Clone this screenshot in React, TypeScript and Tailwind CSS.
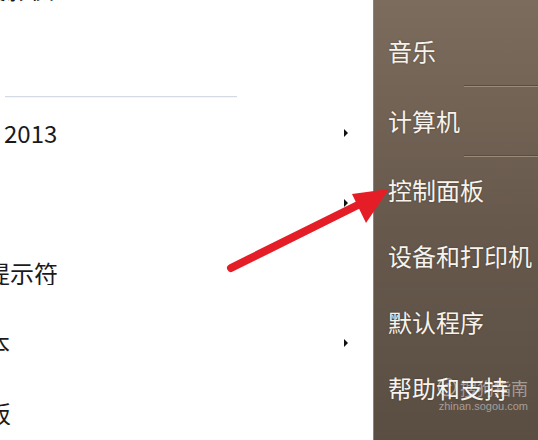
const Caret = () => (
  <svg width="6" height="10" viewBox="0 0 6 10" className="shrink-0">
    <path d="M1 1 L5 5 L1 9 Z" fill="#111" />
  </svg>
);

const leftRows: { text: string; offset: string; arrow: boolean }[] = [
  { text: "2013", offset: "ml-[4px]", arrow: true },
  { text: "", offset: "", arrow: true },
  { text: "命令提示符", offset: "-ml-[62px]", arrow: false },
  { text: "记事本", offset: "-ml-[62px]", arrow: true },
  { text: "写字板", offset: "-ml-[61px]", arrow: false },
];

const rightItems = ["音乐", "计算机", "控制面板", "设备和打印机", "默认程序", "帮助和支持"];

const App = () => {
  return (
    <div
      className="relative w-[538px] h-[440px] flex overflow-hidden bg-white"
      style={{ fontFamily: '"Noto Sans CJK SC", "Noto Sans", sans-serif' }}>
      {/* left column of the start menu */}
      <div className="w-[373px] shrink-0 flex flex-col overflow-hidden">
        <div className="h-[70px] shrink-0 -mt-[46px] flex items-center text-[24px] text-[#1a1a1a] whitespace-nowrap">
          <span className="-ml-[90px]">连接到投影仪</span>
        </div>
        <div className="shrink-0 mt-[72px] ml-[5px] w-[232px] h-px bg-[#d5dbe4]" />
        <div className="shrink-0 ml-[5px] w-[232px] h-px bg-[#f3f6fa]" />
        {leftRows.map((row, i) => (
          <div key={i} className="h-[70px] shrink-0 flex items-center whitespace-nowrap">
            <div className="w-[343px] overflow-hidden flex">
              <span className={`text-[24px] leading-none text-[#1a1a1a] ${row.offset}`}>
                {row.text}
              </span>
            </div>
            {row.arrow && <Caret />}
          </div>
        ))}
      </div>

      {/* right column */}
      <div className="flex-1 flex flex-col border-l border-[#8d8378] bg-gradient-to-b from-[#7c6c5d] via-[#67594c] to-[#5a4e43] pt-[17px]">
        {rightItems.map((item, i) => (
          <div key={item} className="flex flex-col">
            <div
              className={`${i < 2 ? "h-[68px]" : "h-[66px]"} flex items-center pl-[14px] text-[24px] leading-none text-[#f7f3ec] whitespace-nowrap [text-shadow:0_0_2px_rgba(0,0,0,0.35)]`}>
              {item}
            </div>
            {i < 2 && (
              <div className="ml-[90px] h-[2px] flex flex-col">
                <div className="h-px bg-[#5a4e43]" />
                <div className="h-px bg-[#9a8a7a]" />
              </div>
            )}
          </div>
        ))}
      </div>

      {/* watermark */}
      <div className="absolute left-[437px] top-[377px] flex flex-col items-end text-white/45">
        <div className="flex items-center gap-[3px]">
          <svg width="20" height="20" viewBox="0 0 20 20">
            <circle cx="10" cy="10" r="8.5" fill="none" stroke="currentColor" strokeWidth="1.6" />
            <path d="M6 12 C8 6 13 6 14 9" fill="none" stroke="currentColor" strokeWidth="1.6" />
          </svg>
          <span className="text-[17px] leading-none">搜狗指南</span>
        </div>
        <span className="mt-[4px] text-[11px] leading-none" style={{ fontFamily: '"Liberation Sans", sans-serif' }}>
          zhinan.sogou.com
        </span>
      </div>

      {/* red annotation arrow */}
      <svg className="absolute left-0 top-0 pointer-events-none" width="538" height="440">
        <line x1="231" y1="268" x2="368" y2="200" stroke="#e51d26" strokeWidth="8" strokeLinecap="round" />
        <polygon points="389,189 352,194 366,223" fill="#e51d26" />
      </svg>
    </div>
  );
};

export default App;
